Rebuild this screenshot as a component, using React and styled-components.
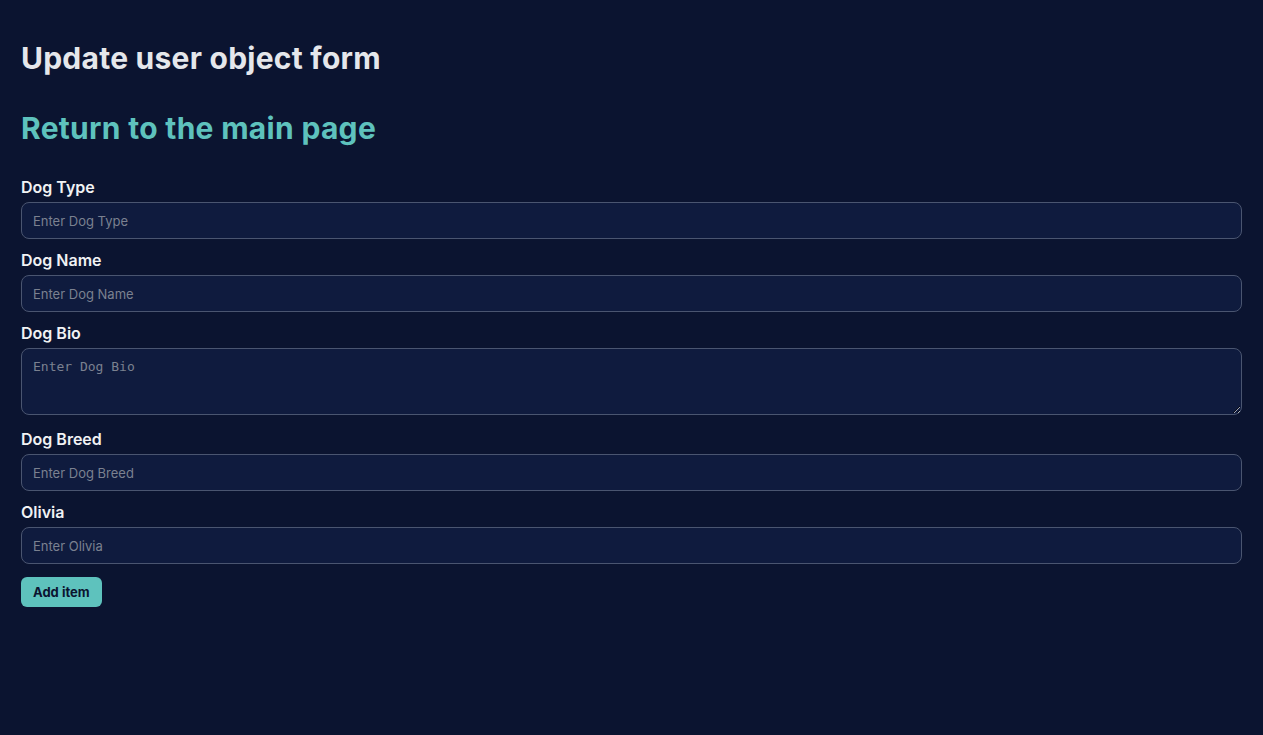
import React from 'react';
import styled, { createGlobalStyle } from 'styled-components';

const GlobalStyle = createGlobalStyle`
  html, body {
    margin: 0;
    padding: 0;
    background: #0b1430;
    font-family: Inter, 'Noto Sans', sans-serif;
  }
  #root {
    min-height: 100vh;
  }
`;

const Page = styled.div`
  padding: 21px 21px 40px;
  color: #e5e7eb;
  min-height: 100vh;
  box-sizing: border-box;
`;

const Title = styled.h1`
  margin: 17px 0 0;
  font-size: 30px;
  font-weight: 700;
  line-height: 40px;
  letter-spacing: 0.25px;
  color: #e5e7eb;
`;

const BackLink = styled.a`
  display: block;
  margin: 30px 0 27px;
  font-size: 30px;
  font-weight: 700;
  line-height: 40px;
  letter-spacing: 0.3px;
  color: #5ec2bd;
  text-decoration: none;
  cursor: pointer;
`;

const Form = styled.form`
  display: flex;
  flex-direction: column;
`;

const Field = styled.div`
  display: flex;
  flex-direction: column;
  margin-bottom: ${(p) => (p.$tall ? '12px' : '9px')};
`;

const Label = styled.label`
  font-size: 16px;
  font-weight: 600;
  line-height: 24px;
  color: #f1f2f4;
  margin-bottom: 3px;
`;

const Input = styled.input`
  box-sizing: border-box;
  height: 37px;
  width: 100%;
  padding: 0 11px;
  background: #0f1b3e;
  border: 1px solid #4a5570;
  border-radius: 8px;
  color: #e5e7eb;
  font-family: Inter, sans-serif;
  font-size: 13px;
  outline: none;
  &::placeholder {
    color: #7b8190;
  }
`;

const TextArea = styled.textarea`
  box-sizing: border-box;
  height: 67px;
  width: 100%;
  padding: 10px 11px;
  background: #0f1b3e;
  border: 1px solid #4a5570;
  border-radius: 8px;
  color: #e5e7eb;
  font-family: 'DejaVu Sans Mono', monospace;
  font-size: 13px;
  outline: none;
  &::placeholder {
    color: #7b8190;
  }
`;

const Button = styled.button`
  align-self: flex-start;
  margin-top: 4px;
  height: 30px;
  padding: 0 12px;
  background: #5ec2bd;
  border: none;
  border-radius: 6px;
  color: #0b1430;
  font-family: Inter, sans-serif;
  font-size: 13px;
  font-weight: 700;
  cursor: pointer;
`;

const fields = [
  { name: 'Dog Type' },
  { name: 'Dog Name' },
  { name: 'Dog Bio', multiline: true },
  { name: 'Dog Breed' },
  { name: 'Olivia' },
];

const App = () => {
  return (
    <>
      <GlobalStyle />
      <Page>
        <Title>Update user object form</Title>
        <BackLink>Return to the main page</BackLink>
        <Form onSubmit={(e) => e.preventDefault()}>
          {fields.map((f) => (
            <Field key={f.name} $tall={f.multiline}>
              <Label>{f.name}</Label>
              {f.multiline ? (
                <TextArea placeholder={`Enter ${f.name}`} />
              ) : (
                <Input type='text' placeholder={`Enter ${f.name}`} />
              )}
            </Field>
          ))}
          <Button type='submit'>Add item</Button>
        </Form>
      </Page>
    </>
  );
};

export default App;
